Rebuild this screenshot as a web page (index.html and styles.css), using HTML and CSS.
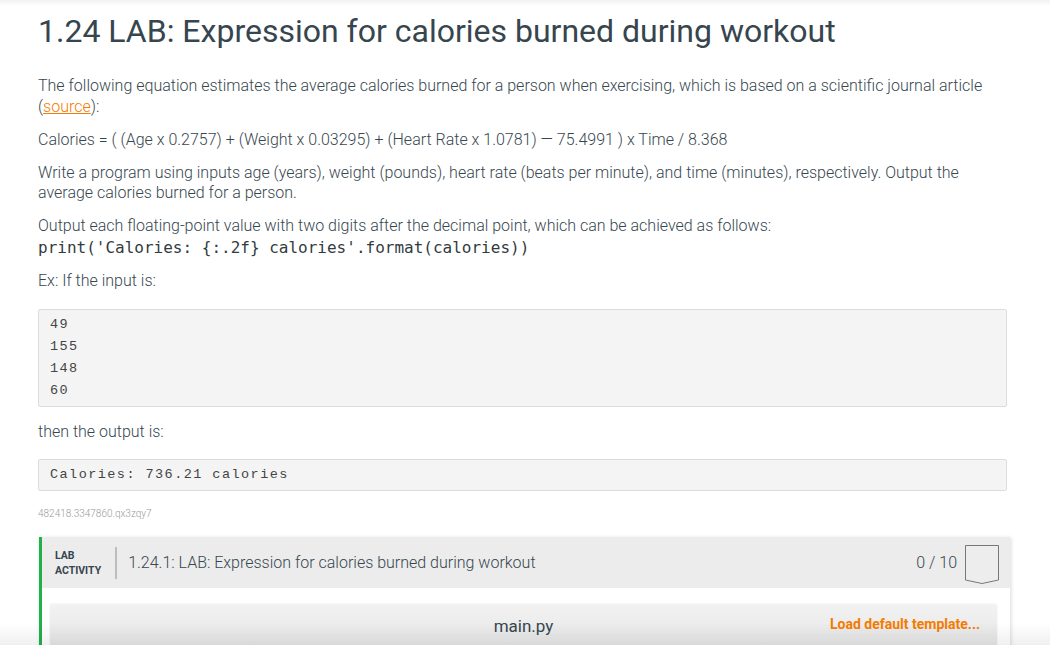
FILE: index.html
```html
<!DOCTYPE html>
<html>
<head>
<meta charset="utf-8">
<link rel="stylesheet" href="styles.css">
</head>
<body>
<div class="top-shade"></div>
<main class="page">
  <h1 class="title">1.24 LAB: Expression for calories burned during workout</h1>
  <p class="para">The following equation estimates the average calories burned for a person when exercising, which is based on a scientific journal article (<a class="link" href="#">source</a>):</p>
  <p class="para">Calories = ( (Age x 0.2757) + (Weight x 0.03295) + (Heart Rate x 1.0781) — 75.4991 ) x Time / 8.368</p>
  <p class="para">Write a program using inputs age (years), weight (pounds), heart rate (beats per minute), and time (minutes), respectively. Output the average calories burned for a person.</p>
  <p class="para">Output each floating-point value with two digits after the decimal point, which can be achieved as follows:<br><code class="inline-code">print('Calories: {:.2f} calories'.format(calories))</code></p>
  <p class="para">Ex: If the input is:</p>
  <pre class="io-box">49
155
148
60</pre>
  <p class="para">then the output is:</p>
  <pre class="io-box">Calories: 736.21 calories</pre>
  <div class="ident">482418.3347860.qx3zqy7</div>

  <section class="lab">
    <header class="lab-head">
      <div class="lab-tag">LAB<br>ACTIVITY</div>
      <div class="lab-title">1.24.1: LAB: Expression for calories burned during workout</div>
      <div class="lab-score">0 / 10</div>
      <svg class="lab-badge" width="34" height="40" viewBox="0 0 34 40"><path d="M0.5 0.5 H33.5 V35 L17 38.5 L0.5 35 Z" fill="#ededed" stroke="#777" stroke-width="1"/></svg>
    </header>
    <div class="lab-body">
      <div class="editor-bar">
        <span class="file-name">main.py</span>
        <span class="load-tpl">Load default template...</span>
      </div>
    </div>
  </section>
</main>
<div class="bottom-shade"></div>
</body>
</html>
```

FILE: styles.css
```css
html, body {
  margin: 0;
  padding: 0;
  background: #fff;
  overflow: hidden;
}
body {
  font-family: Roboto, "Liberation Sans", sans-serif;
  color: #3a4a52;
}
.top-shade {
  position: fixed;
  top: 0; left: 0; right: 0;
  height: 6px;
  background: linear-gradient(rgba(0,0,0,0.05), rgba(0,0,0,0));
  z-index: 5;
}
.bottom-shade {
  position: fixed;
  bottom: 0; left: 0; right: 0;
  height: 22px;
  background: linear-gradient(rgba(255,255,255,0), rgba(0,0,0,0.06));
  z-index: 5;
}
.page {
  width: 969px;
  padding: 9px 0 0 38px;
}
.title {
  margin: 0 0 23px;
  font-size: 32px;
  font-weight: 400;
  line-height: 44px;
  color: #36454e;
}
.para {
  margin: 0 0 12.5px;
  font-size: 16px;
  font-weight: 300;
  line-height: 20.5px;
  color: #37474f;
}
.link {
  color: #f57c00;
  text-decoration: underline;
}
.inline-code {
  font-family: "DejaVu Sans Mono", monospace;
  font-size: 16px;
  line-height: 22px;
  color: #333b40;
}
.io-box {
  margin: 17px 0 15px;
  padding: 4px 11px;
  background: #f4f4f4;
  border: 1px solid #dcdcdc;
  border-radius: 2px;
  font-family: "Liberation Mono", monospace;
  font-size: 13.5px;
  letter-spacing: 1.45px;
  line-height: 22px;
  color: #444;
}
.ident {
  margin-top: 16px;
  font-size: 10px;
  font-weight: 300;
  line-height: 14px;
  color: #9a9a9a;
}
.lab {
  margin: 16px 0 0 1px;
  width: 968px;
  box-shadow: 1px 1px 4px rgba(0,0,0,0.15);
  border-left: 3px solid #22b04b;
}
.lab-head {
  display: flex;
  align-items: center;
  height: 51px;
  background: #ececec;
  padding: 0 11px 0 13px;
}
.lab-tag {
  font-size: 10.5px;
  font-weight: 700;
  line-height: 15px;
  color: #36454e;
  padding-right: 14px;
  border-right: 2px solid #bdbdbd;
  height: 32px;
  display: flex;
  align-items: center;
}
.lab-title {
  flex: 1;
  padding-left: 11px;
  font-size: 16px;
  font-weight: 300;
  color: #37474f;
}
.lab-score {
  font-size: 16px;
  font-weight: 300;
  color: #37474f;
  margin-right: 8px;
}
.lab-badge {
  display: block;
  margin-top: 4px;
}
.lab-body {
  background: #fff;
  padding: 16px 13px 0 8px;
  height: 60px;
}
.editor-bar {
  position: relative;
  display: flex;
  align-items: center;
  justify-content: center;
  height: 44px;
  background: linear-gradient(#f2f2f2, #e6e6e6);
  box-shadow: 0 0 2px rgba(0,0,0,0.1);
  border-radius: 2px;
}
.file-name {
  font-size: 17px;
  font-weight: 400;
  color: #37474f;
}
.load-tpl {
  position: absolute;
  right: 17px;
  top: 12px;
  font-size: 14px;
  font-weight: 700;
  color: #f57c00;
}
```
